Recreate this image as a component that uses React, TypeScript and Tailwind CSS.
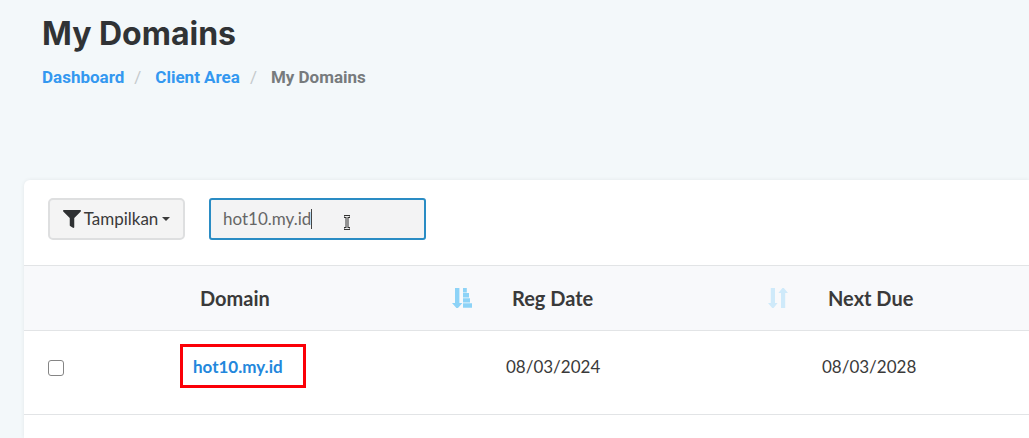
import { useState } from 'react';
import { FaFilter } from 'react-icons/fa';

interface Domain {
  id: number;
  name: string;
  regDate: string;
  nextDue: string;
}

const domains: Domain[] = [
  { id: 1, name: 'hot10.my.id', regDate: '08/03/2024', nextDue: '08/03/2028' },
];

function SortAscIcon() {
  return (
    <svg viewBox="0 0 20 20" className="w-5 h-5 text-[#8dd3f7]" fill="currentColor" aria-hidden="true">
      <path d="M3 0h4.4v15h3L6 20H4.4L0 15h3z" />
      <path d="M11 0h3.8v4.4H11zM11 5.1h6v4.4h-6zM11 10.2h7v4.4h-7zM11 15.3h9v4.4h-9z" />
    </svg>
  );
}

function SortIcon() {
  return (
    <svg viewBox="0 0 20 20" className="w-5 h-5 text-[#cfeafa]" fill="currentColor" aria-hidden="true">
      <path d="M2.8 0H7v15h2.6L5.6 20H4.2L0 15h2.8z" />
      <path d="M13 20h4.2V5H20l-4.2-5h-1.4l-4 5H13z" />
    </svg>
  );
}

export default function App() {
  const [search, setSearch] = useState('hot10.my.id');

  return (
    <main className="min-h-screen flex flex-col bg-[#f3f8fa] pl-6 overflow-hidden font-[Lato,sans-serif] text-[17px] leading-6 text-[#3a3a3a]">
      {/* Page heading */}
      <header className="h-[180px] pl-[18px] pt-[14px]">
        <h1 className="text-[32px] leading-10 font-bold font-[Inter,sans-serif] text-[#303335]">My Domains</h1>
        <nav aria-label="Breadcrumb" className="mt-[11px]">
          <ol className="flex font-[Roboto,sans-serif] font-bold text-[#777b7d]">
            <li><a href="#dashboard" className="text-[#3498f0]">Dashboard</a></li>
            <li className="w-[31px] pl-[10px] font-normal text-[#c5cacc]" aria-hidden="true">/</li>
            <li><a href="#client-area" className="text-[#3498f0]">Client Area</a></li>
            <li className="w-[31px] pl-[10px] font-normal text-[#c5cacc]" aria-hidden="true">/</li>
            <li aria-current="page">My Domains</li>
          </ol>
        </nav>
      </header>

      {/* Domain list */}
      <section className="flex-1 bg-white rounded-tl-md shadow-[0_0_4px_rgba(0,0,0,0.07)]">
        <div className="flex gap-6 pl-6 pt-[18px] pb-[25px]">
          <button type="button" className="w-[137px] h-[42px] pb-px flex items-center justify-center gap-[3px] rounded-[5px] border-2 border-[#dedfe0] bg-[#f4f4f4]">
            <FaFilter className="w-[18px] h-[18px] text-[#2f3133]" />
            <span>Tampilkan</span>
            <svg viewBox="0 0 8 4" className="w-2 h-1 ml-px" fill="currentColor" aria-hidden="true"><path d="M0 0h8L4 4z" /></svg>
          </button>
          <div className="relative">
            <input
              type="text"
              aria-label="Search domains"
              value={search}
              onChange={(e) => setSearch(e.target.value)}
              className="w-[217px] h-[42px] px-3 pb-px rounded-[3px] border-2 border-[#2a8cc4] bg-[#f3f3f4] text-[#666] outline-none"
            />
            <span className="absolute left-[102px] top-[11px] w-px h-5 bg-[#444]" />
            <svg viewBox="0 0 8 15" className="absolute left-[134px] top-[17px] w-2 h-[15px]" fill="none" aria-hidden="true">
              <path d="M1 1.5h6M1 13.5h6M4 1.5v12" stroke="#333" strokeWidth="3" />
              <path d="M1.5 1.5h5M1.5 13.5h5M4 1.5v12" stroke="#eee" strokeWidth="1" />
            </svg>
          </div>
        </div>

        <table className="w-full table-fixed text-left">
          <colgroup>
            <col className="w-[152px]" />
            <col className="w-[312px]" />
            <col className="w-[316px]" />
            <col />
          </colgroup>
          <thead className="bg-[#f8f9fb] text-xl">
            <tr className="h-[65px] border-y border-[#e2e4e6]">
              <th aria-label="Select" />
              <th aria-sort="ascending" className="pl-6 pr-4 pb-px font-bold">
                <div className="flex items-center justify-between">Domain<SortAscIcon /></div>
              </th>
              <th className="pl-6 pr-4 pb-px font-bold">
                <div className="flex items-center justify-between">Reg Date<SortIcon /></div>
              </th>
              <th className="pl-6 pb-px font-bold">Next Due</th>
            </tr>
          </thead>
          <tbody>
            {domains.map((domain) => (
              <tr key={domain.id} className="h-[84px] border-b border-[#e2e4e6] align-top">
                <td className="pl-6 pt-[29px]">
                  <input
                    type="checkbox"
                    aria-label={`Select ${domain.name}`}
                    className="block w-4 h-4 appearance-none rounded-[3px] border border-[#858585] bg-white checked:bg-[#2589e6]"
                  />
                </td>
                <td className="pl-1 pt-[13px]">
                  <a href="#domain" className="inline-flex items-center w-[126px] h-[44px] pl-[10px] pt-[2px] border-3 border-[#fb0007] font-bold text-[#2387dc]">
                    {domain.name}
                  </a>
                </td>
                <td className="pl-[18px] pt-6">{domain.regDate}</td>
                <td className="pl-[18px] pt-6">{domain.nextDue}</td>
              </tr>
            ))}
          </tbody>
        </table>
      </section>
    </main>
  );
}
